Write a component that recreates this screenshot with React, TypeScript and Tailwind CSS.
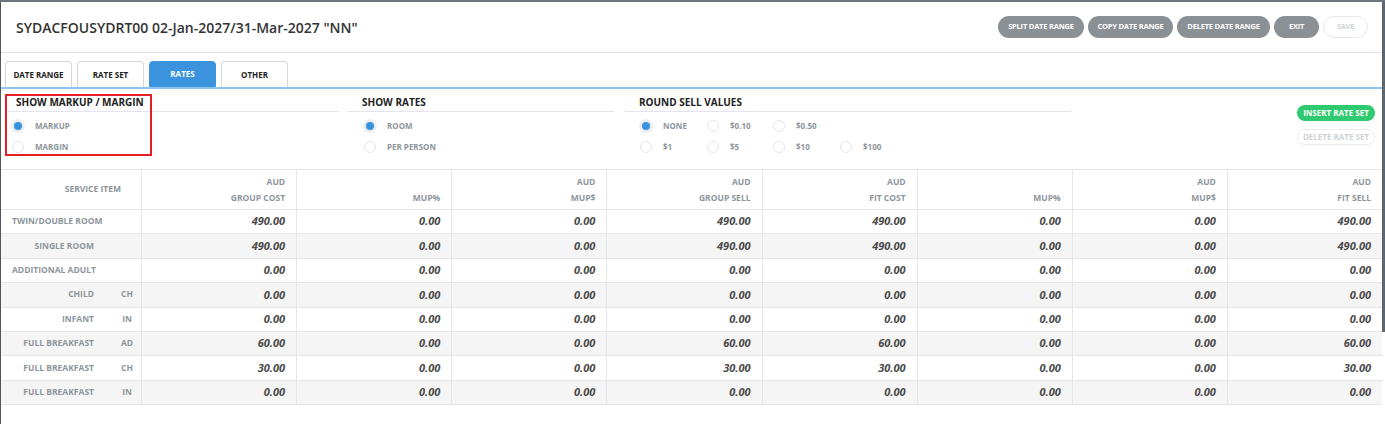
import React from "react";

const font = { fontFamily: '"Open Sans", "Liberation Sans", sans-serif' };

type Row = { label: string; code?: string; vals: string[] };

const rows: Row[] = [
  { label: "TWIN/DOUBLE ROOM", vals: ["490.00", "0.00", "0.00", "490.00", "490.00", "0.00", "0.00", "490.00"] },
  { label: "SINGLE ROOM", vals: ["490.00", "0.00", "0.00", "490.00", "490.00", "0.00", "0.00", "490.00"] },
  { label: "ADDITIONAL ADULT", vals: ["0.00", "0.00", "0.00", "0.00", "0.00", "0.00", "0.00", "0.00"] },
  { label: "CHILD", code: "CH", vals: ["0.00", "0.00", "0.00", "0.00", "0.00", "0.00", "0.00", "0.00"] },
  { label: "INFANT", code: "IN", vals: ["0.00", "0.00", "0.00", "0.00", "0.00", "0.00", "0.00", "0.00"] },
  { label: "FULL BREAKFAST", code: "AD", vals: ["60.00", "0.00", "0.00", "60.00", "60.00", "0.00", "0.00", "60.00"] },
  { label: "FULL BREAKFAST", code: "CH", vals: ["30.00", "0.00", "0.00", "30.00", "30.00", "0.00", "0.00", "30.00"] },
  { label: "FULL BREAKFAST", code: "IN", vals: ["0.00", "0.00", "0.00", "0.00", "0.00", "0.00", "0.00", "0.00"] },
];

const cols: [string, string][] = [
  ["AUD", "GROUP COST"],
  ["", "MUP%"],
  ["AUD", "MUP$"],
  ["AUD", "GROUP SELL"],
  ["AUD", "FIT COST"],
  ["", "MUP%"],
  ["AUD", "MUP$"],
  ["AUD", "FIT SELL"],
];

function Radio({ on, label }: { on?: boolean; label: string }) {
  return (
    <div className="flex h-[21px] items-center gap-[11px]">
      <span
        className={
          on
            ? "h-[12px] w-[12px] rounded-full border-2 border-[#e8eef4] bg-[#3a93dc] shadow-[0_0_0_1px_#f0f0f0]"
            : "h-[12px] w-[12px] rounded-full border border-[#e6e6e6] bg-white"
        }
      />
      <span className="text-[8px] font-bold text-[#8e969b]">{label}</span>
    </div>
  );
}

function Pill({ children, ghost, w }: { children: string; ghost?: boolean; w: string }) {
  return (
    <button
      className={`${w} h-[22px] rounded-full text-[7.5px] font-bold tracking-[-0.2px] ${
        ghost ? "border border-[#e8e8e8] bg-white text-[#cfd3d6]" : "bg-[#8b9095] text-white"
      }`}
    >
      {children}
    </button>
  );
}

function Tab({ label, active }: { label: string; active?: boolean }) {
  return (
    <div
      className={
        active
          ? "flex h-[26px] w-[67px] items-center justify-center rounded-t-[4px] border border-[#3a93dc] bg-[#3a93dc] text-[8px] font-bold text-white"
          : "flex h-[26px] w-[67px] items-center justify-center rounded-t-[4px] border border-b-0 border-[#d6d6d6] bg-white text-[8px] font-bold text-[#222]"
      }
    >
      {label}
    </div>
  );
}

export default function App() {
  return (
    <div className="flex h-[424px] w-[1385px] bg-[#6d7378] pt-[2px]" style={font}>
      <div className="relative flex h-full w-[1382px] flex-col border-l border-[#555] bg-white">
        {/* header */}
        <div className="flex h-[51px] shrink-0 items-center justify-between border-b border-[#e2e0f2] pl-[15px] pr-[14px]">
          <h1 className="text-[14px] font-semibold text-[#333]">SYDACFOUSYDRT00 02-Jan-2027/31-Mar-2027 "NN"</h1>
          <div className="flex items-center gap-[4px]">
            <Pill w="w-[86px]">SPLIT DATE RANGE</Pill>
            <Pill w="w-[85px]">COPY DATE RANGE</Pill>
            <Pill w="w-[93px]">DELETE DATE RANGE</Pill>
            <Pill w="w-[45px]">EXIT</Pill>
            <Pill w="w-[45px]" ghost>SAVE</Pill>
          </div>
        </div>

        {/* tabs */}
        <div className="flex shrink-0 gap-[5px] border-b-2 border-[#8dc3ec] px-[4px] pt-[8px]">
          <Tab label="DATE RANGE" />
          <Tab label="RATE SET" />
          <Tab label="RATES" active />
          <Tab label="OTHER" />
        </div>

        {/* options */}
        <div className="flex h-[80px] shrink-0 pt-[6px]">
          <div className="ml-[4px] w-[334px]">
            <div className="border-b border-[#e4e2f3] pb-[1px] pl-[11px] text-[10px] font-bold text-[#222]">SHOW MARKUP / MARGIN</div>
            <div className="pl-[7px] pt-[3px]">
              <Radio on label="MARKUP" />
              <Radio label="MARGIN" />
            </div>
          </div>
          <div className="ml-[8px] w-[267px]">
            <div className="border-b border-[#e4e2f3] pb-[1px] pl-[15px] text-[10px] font-bold text-[#222]">SHOW RATES</div>
            <div className="pl-[17px] pt-[3px]">
              <Radio on label="ROOM" />
              <Radio label="PER PERSON" />
            </div>
          </div>
          <div className="ml-[11px] w-[446px]">
            <div className="border-b border-[#e4e2f3] pb-[1px] pl-[14px] text-[10px] font-bold text-[#222]">ROUND SELL VALUES</div>
            <div className="grid grid-cols-[67px_66px_67px_67px] pl-[15px] pt-[3px]">
              <Radio on label="NONE" />
              <Radio label="$0.10" />
              <Radio label="$0.50" />
              <span />
              <Radio label="$1" />
              <Radio label="$5" />
              <Radio label="$10" />
              <Radio label="$100" />
            </div>
          </div>
          <div className="ml-auto mr-[7px] flex flex-col gap-[8px] pt-[10px]">
            <button className="h-[16px] w-[78px] rounded-full bg-[#2fca6f] text-[8px] font-bold text-white">INSERT RATE SET</button>
            <button className="h-[16px] w-[78px] rounded-full border border-[#ebebeb] bg-white text-[8px] font-bold text-[#cfd3d6]">DELETE RATE SET</button>
          </div>
        </div>

        {/* table */}
        <div className="border-t border-[#e6e6e6]">
          <div className="grid h-[40px] grid-cols-[140px_repeat(8,1fr)] border-b border-[#e6e6e6]">
            <div className="flex items-center justify-end pr-[20px] text-[8.5px] font-bold text-[#8e969b]">SERVICE ITEM</div>
            {cols.map(([a, b], i) => (
              <div key={i} className="flex flex-col items-end justify-center gap-[5px] border-l border-[#e6e6e6] pr-[11px] text-[8.5px] font-bold text-[#8e969b]">
                <span className="h-[11px]">{a}</span>
                <span className="h-[11px]">{b}</span>
              </div>
            ))}
          </div>
          {rows.map((r, i) => (
            <div
              key={i}
              className={`grid h-[24.4px] grid-cols-[140px_repeat(8,1fr)] border-b border-[#e6e6e6] ${i % 2 === 1 ? "bg-[#f5f5f5]" : "bg-white"}`}
            >
              <div className="flex items-center pl-[11px] text-[8.5px] font-bold text-[#8e969b]">
                <span className="w-[82px] whitespace-nowrap text-right">{r.label}</span>
                {r.code && <span className="ml-[21px] w-[24px] text-center">{r.code}</span>}
              </div>
              {r.vals.map((v, j) => (
                <div key={j} className="flex items-center justify-end border-l border-[#e6e6e6] pr-[11px] text-[11px] font-bold italic text-[#4a4a4a]">
                  {v}
                </div>
              ))}
            </div>
          ))}
        </div>

        {/* annotation box */}
        <div className="pointer-events-none absolute left-[4px] top-[92px] h-[62px] w-[147px] border-2 border-[#e31e24]" />
      </div>
      <div className="flex w-[3px] flex-col">
        <div className="h-[330px] bg-[#5d6670]" />
        <div className="flex-1 bg-white" />
      </div>
    </div>
  );
}
